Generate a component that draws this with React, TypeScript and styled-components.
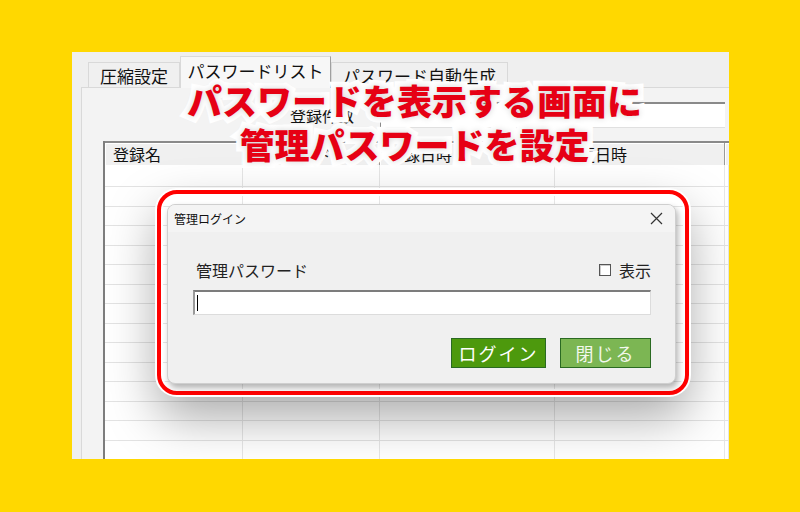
import React from 'react';
import styled, { createGlobalStyle } from 'styled-components';

const GlobalStyle = createGlobalStyle`
  html, body {
    margin: 0;
    padding: 0;
  }
  body {
    background: #ffd800;
    font-family: "Noto Sans CJK JP", "Noto Sans", sans-serif;
  }
`;

const columns = ['登録名', 'パスワード', '登録日時', '変更日時', ''];
const rowHeights = [22, ...Array.from({ length: 15 }, () => 19.5)];

//close glyph of the dialog title bar
const CloseIcon: React.FC = () => (
  <svg width="13" height="13" viewBox="0 0 13 13">
    <path d="M1 1 L12 12 M12 1 L1 12" stroke="#333" strokeWidth="1.2" fill="none" />
  </svg>
);

const App: React.FC = () => {
  return (
    <Page>
      <GlobalStyle />
      <Screen>
        <TabBar>
          <Tab width={92}>圧縮設定</Tab>
          <Tab width={151} active>
            パスワードリスト
          </Tab>
          <Tab width={177}>パスワード自動生成</Tab>
        </TabBar>
        <Panel>
          <CountRow>
            <CountLabel>登録件数</CountLabel>
            <CountBox />
          </CountRow>
          <Table>
            <HeaderRow>
              {columns.map((c, i) => (
                <HeaderCell key={i}>{c}</HeaderCell>
              ))}
            </HeaderRow>
            {rowHeights.map((h, r) => (
              <Row key={r} style={{ height: h }}>
                {columns.map((_, i) => (
                  <Cell key={i} />
                ))}
              </Row>
            ))}
          </Table>
        </Panel>

        <Caption>
          パスワードを表示する画面に
          <br />
          管理パスワードを設定
        </Caption>

        <Frame>
          <Dialog>
            <TitleBar>
              <span>管理ログイン</span>
              <CloseIcon />
            </TitleBar>
            <DialogBody>
              <LabelRow>
                <FieldLabel>管理パスワード</FieldLabel>
                <CheckLabel>
                  <CheckBox />
                  表示
                </CheckLabel>
              </LabelRow>
              <PasswordBox>
                <Caret />
              </PasswordBox>
              <ButtonRow>
                <DialogButton width={95} variant="primary">
                  ログイン
                </DialogButton>
                <DialogButton width={91} variant="secondary">
                  閉じる
                </DialogButton>
              </ButtonRow>
            </DialogBody>
          </Dialog>
        </Frame>
      </Screen>
    </Page>
  );
};

const Page = styled.div`
  width: 800px;
  height: 512px;
  box-sizing: border-box;
  padding: 52px 71px 53px 72px;
  background: #ffd800;
`;
const Screen = styled.div`
  position: relative;
  width: 100%;
  height: 100%;
  background: #efefef;
  overflow: hidden;
  display: flex;
  flex-direction: column;
`;
const TabBar = styled.div`
  display: flex;
  align-items: flex-end;
  height: 31px;
  margin-top: 5px;
  padding-left: 16px;
  margin-bottom: -1px;
  position: relative;
  z-index: 1;
`;
const Tab = styled.div<{ width: number; active?: boolean }>`
  box-sizing: border-box;
  width: ${(p) => p.width}px;
  height: ${(p) => (p.active ? 32 : 26)}px;
  display: flex;
  align-items: center;
  justify-content: center;
  padding-bottom: ${(p) => (p.active ? 4 : 0)}px;
  font-size: 17px;
  color: #111;
  background: ${(p) => (p.active ? '#f7f7f7' : '#f0f0f0')};
  border: 1px solid #d9d9d9;
  border-right-color: ${(p) => (p.active ? '#a0a0a0' : '#d9d9d9')};
  border-bottom: ${(p) => (p.active ? 'none' : '1px solid #d9d9d9')};
  white-space: nowrap;
`;
const Panel = styled.div`
  flex: 1;
  margin-left: 9px;
  border-top: 1px solid #d9d9d9;
  border-left: 1px solid #d9d9d9;
  background: #f3f3f3;
  padding: 14px 0 0 21px;
  display: flex;
  flex-direction: column;
  min-height: 0;
`;
const CountRow = styled.div`
  display: flex;
  align-items: center;
  gap: 26px;
  padding-left: 187px;
  height: 26px;
`;
const CountLabel = styled.span`
  font-size: 16px;
  color: #111;
  width: 64px;
  white-space: nowrap;
`;
const CountBox = styled.div`
  flex: 1;
  height: 26px;
  box-sizing: border-box;
  margin-right: 4px;
  background: #fff;
  border-top: 2px solid #8a8a8a;
  border-left: 1px solid #8a8a8a;
  border-bottom: 1px solid #e0e0e0;
`;
const Table = styled.div`
  margin-top: 13px;
  flex: 1;
  display: flex;
  flex-direction: column;
  border-left: 2px solid #7d7d7d;
  background: #fff;
  overflow: hidden;
`;
const grid = `
  display: grid;
  grid-template-columns: 138px 137px 175px 170px 1fr;
`;
const HeaderRow = styled.div`
  ${grid}
  height: 22px;
  flex: none;
  border-top: 2px solid #8a8a8a;
  background: #f0f0f0;
`;
const HeaderCell = styled.div`
  display: flex;
  align-items: center;
  padding-left: 8px;
  font-size: 16px;
  color: #111;
  border-right: 1px solid #9a9a9a;
  box-shadow: inset 1px 1px 0 #fff;
  white-space: nowrap;
  overflow: hidden;
`;
const Row = styled.div`
  ${grid}
  flex: none;
  box-sizing: border-box;
  border-bottom: 1px solid #e3e3e3;
`;
const Cell = styled.div`
  border-right: 1px solid #e6e6e6;
`;
const Caption = styled.div`
  position: absolute;
  top: 26px;
  left: 0;
  right: 0;
  transform: translateX(14px);
  text-align: center;
  font-size: 35px;
  font-weight: 900;
  line-height: 44px;
  color: #e60014;
  -webkit-text-stroke: 11px #fff;
  paint-order: stroke fill;
  text-shadow: 0 0 6px rgba(0, 0, 0, 0.18);
  z-index: 3;
  white-space: nowrap;
`;
const Frame = styled.div`
  position: absolute;
  left: 85px;
  top: 138px;
  width: 532px;
  height: 205px;
  box-sizing: border-box;
  border: 4px solid #ff0000;
  border-radius: 20px;
  padding: 10px 9px 7px 6px;
  box-shadow: 0 0 0 2px #fff, inset 0 0 0 2px #fff, 0 22px 50px rgba(0, 0, 0, 0.34);
  z-index: 2;
`;
const Dialog = styled.div`
  width: 100%;
  height: 100%;
  box-sizing: border-box;
  background: #f0f0f0;
  border: 1px solid #cfcfcf;
  border-radius: 8px;
  box-shadow: 2px 4px 6px rgba(0, 0, 0, 0.3);
  display: flex;
  flex-direction: column;
  overflow: hidden;
`;
const TitleBar = styled.div`
  height: 27px;
  flex: none;
  display: flex;
  align-items: center;
  justify-content: space-between;
  padding: 0 12px 0 6px;
  background: #f4f4f4;
  font-size: 12px;
  color: #111;
`;
const DialogBody = styled.div`
  padding: 28px 24px 16px 25px;
  display: flex;
  flex-direction: column;
`;
const LabelRow = styled.div`
  display: flex;
  align-items: center;
  justify-content: space-between;
  height: 20px;
  padding-left: 3px;
  margin-bottom: 10px;
`;
const FieldLabel = styled.span`
  font-size: 16px;
  color: #222;
`;
const CheckLabel = styled.span`
  display: flex;
  align-items: center;
  gap: 8px;
  font-size: 16px;
  color: #222;
`;
const CheckBox = styled.span`
  width: 12px;
  height: 12px;
  box-sizing: border-box;
  border: 1px solid #555;
  background: #fff;
  box-shadow: inset 1px 1px 0 #ccc;
`;
const PasswordBox = styled.div`
  position: relative;
  height: 25px;
  box-sizing: border-box;
  background: #fff;
  border-top: 2px solid #7c7c7c;
  border-left: 2px solid #9a9a9a;
  border-right: 1px solid #dcdcdc;
  border-bottom: 1px solid #dcdcdc;
`;
const Caret = styled.span`
  position: absolute;
  left: 2px;
  top: 3px;
  width: 1px;
  height: 16px;
  background: #000;
`;
const ButtonRow = styled.div`
  display: flex;
  justify-content: flex-end;
  gap: 14px;
  margin-top: 23px;
`;
const DialogButton = styled.button<{ width: number; variant: 'primary' | 'secondary' }>`
  width: ${(p) => p.width}px;
  height: 30px;
  border: 1px solid #2a6a22;
  background: ${(p) => (p.variant === 'primary' ? '#4d990d' : '#7cb653')};
  color: ${(p) => (p.variant === 'primary' ? '#fff' : '#f2f8ec')};
  font-family: "Noto Sans CJK JP", sans-serif;
  font-size: 18px;
  letter-spacing: 2px;
  padding: 0;
  line-height: 1;
`;

export default App;
